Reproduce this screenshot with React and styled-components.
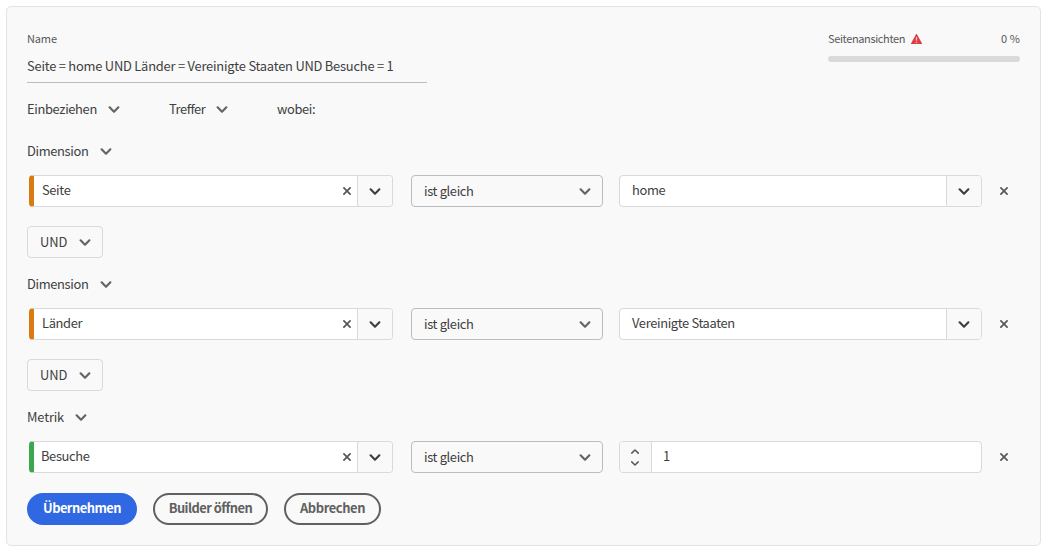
import React from 'react';
import styled, { createGlobalStyle } from 'styled-components';

const GlobalStyle = createGlobalStyle`
  *, *::before, *::after { box-sizing: border-box; }
  body {
    margin: 0;
    background: #fff;
    color: #404040;
    font-family: "Noto Sans CJK SC", "Noto Sans", sans-serif;
    font-size: 12.9px;
    line-height: 20px;
  }
  button, input { font: inherit; color: inherit; }
`;

const Panel = styled.main`
  width: 1035px;
  height: 540px;
  margin: 6px 0 0 6px;
  padding: 21px 20px 20px;
  background: #f9f9f9;
  border: 1px solid #e3e3e3;
  border-radius: 5px;
`;

const Header = styled.header`
  display: flex;
  justify-content: space-between;
  height: 55px;
`;

const NameField = styled.div`
  width: 400px;
  border-bottom: 1px solid #bcbcbc;
`;

const Text = styled.span`
  display: block;
  white-space: nowrap;
  letter-spacing: ${(p) => p.$track ?? -0.35}px;
`;

const SmallText = styled(Text)`
  font-size: 11px;
  color: #585858;
`;

const NameValue = styled(Text)`
  margin-top: 8px;
`;

const Meter = styled.div`
  width: 192px;
`;

const MeterHead = styled.div`
  display: flex;
  align-items: center;
  gap: 6px;
`;

const MeterValue = styled(SmallText)`
  margin-left: auto;
`;

const AlertMark = styled.span`
  display: flex;
  padding-top: 2px;
`;

const Track = styled.div`
  height: 6px;
  margin-top: 8px;
  border-radius: 3px;
  background: #dadada;
`;

const Scope = styled.div`
  display: flex;
  gap: 49px;
  height: 32px;
  margin-top: 10px;
`;

const Picker = styled.button`
  display: flex;
  flex: none;
  align-items: center;
  justify-content: space-between;
  width: ${(p) => p.$width}px;
  height: 32px;
  padding: 0;
  border: 0;
  background: none;
`;

const ScopeLabel = styled.div`
  display: flex;
  align-items: center;
`;

const GroupHead = styled.div`
  display: flex;
  margin: 10px 0 8px;
`;

const Row = styled.div`
  display: flex;
  align-items: center;
  height: 32px;
  padding-left: 2px;
`;

const Field = styled.div`
  display: flex;
  width: ${(p) => p.$width}px;
  height: 32px;
  border: 1px solid #d9d9d9;
  border-left: ${(p) => (p.$accent ? `5px solid ${p.$accent}` : '1px solid #d9d9d9')};
  border-radius: 4px;
  overflow: hidden;
  background: #fff;
`;

const FieldValue = styled.div`
  display: flex;
  flex: 1;
  align-items: center;
  justify-content: space-between;
  padding: 0 6px 2px ${(p) => p.$indent}px;
`;

const ClearIcon = styled.span`
  display: flex;
  padding-top: 2px;
  color: #585858;
`;

const FieldButton = styled.div`
  display: flex;
  align-items: center;
  justify-content: center;
  width: 35px;
  color: #404040;
  background: #f9f9f9;
  border-left: 1px solid #d9d9d9;
`;

const Stepper = styled.div`
  display: flex;
  flex-direction: column;
  align-items: center;
  justify-content: center;
  gap: 7px;
  width: 32px;
  padding-right: 1px;
  color: #585858;
  background: #f9f9f9;
  border-right: 1px solid #d9d9d9;
`;

const Select = styled.button`
  display: flex;
  align-items: center;
  justify-content: space-between;
  width: 192px;
  height: 32px;
  margin: 0 16px 0 18px;
  padding: 0 11px 0 12px;
  border: 1px solid #bcbcbc;
  border-radius: 4px;
  background: #f9f9f9;
`;

const Remove = styled.span`
  display: flex;
  margin-left: 18px;
  color: #585858;
`;

const Operator = styled.button`
  display: flex;
  align-items: center;
  justify-content: space-between;
  width: 76px;
  height: 32px;
  margin-top: 19px;
  padding: 0 11px 0 12px;
  border: 1px solid #d9d9d9;
  border-radius: 4px;
  background: #f9f9f9;
`;

const Actions = styled.footer`
  display: flex;
  gap: 16px;
  margin-top: 20px;
`;

const Action = styled.button`
  display: flex;
  align-items: center;
  justify-content: center;
  width: ${(p) => p.$width}px;
  height: 32px;
  padding: 0 0 2px;
  border: 2px solid ${(p) => (p.$primary ? '#3067e3' : '#606060')};
  border-radius: 16px;
  background: ${(p) => (p.$primary ? '#3067e3' : 'transparent')};
  color: ${(p) => (p.$primary ? '#fff' : '#606060')};
  font-weight: 700;
`;

const Icon = styled.svg`
  display: block;
  flex: none;
  fill: currentColor;
  transform: ${(p) => (p.$up ? 'rotate(180deg)' : 'none')};
`;

const IconTone = styled.span`
  display: flex;
  color: #646464;
`;

const Chevron = () => (
  <Icon width="12" height="7" viewBox="-0.4 -0.2 10.8 6.4">
    <path d="M9.99 1.01A1 1 0 0 0 8.283.303L5 3.586 1.717.303A1 1 0 1 0 .303 1.717l3.99 3.98a1 1 0 0 0 1.414 0l3.99-3.98a.997.997 0 0 0 .293-.707z" />
  </Icon>
);

const SmallChevron = ({ up }) => (
  <Icon $up={up} width="8" height="5" viewBox="0 0 8 5">
    <path d="M7.8.4a.75.75 0 0 0-1.06-.05L4 3 1.26.35A.75.75 0 1 0 .2 1.4l3.27 3.2a.75.75 0 0 0 1.06 0L7.8 1.4a.72.72 0 0 0 0-1z" />
  </Icon>
);

const Cross = () => (
  <Icon width="8" height="8" viewBox="0 0 10 10">
    <path d="M6.548 5L9.63 1.917A1.094 1.094 0 0 0 8.084.371L5 3.454 1.917.37A1.094 1.094 0 0 0 .371 1.917L3.454 5 .37 8.085A1.094 1.094 0 1 0 1.917 9.63L5 6.548l3.084 3.083A1.094 1.094 0 0 0 9.63 8.085z" />
  </Icon>
);

const Alert = () => (
  <Icon width="11" height="10" viewBox="0 0 11 10">
    <path fill="#dc3c46" d="M5.05.3a.52.52 0 0 1 .9 0l4.98 9a.47.47 0 0 1-.42.7H.49a.47.47 0 0 1-.42-.7z" />
    <path fill="#f6b5b9" d="M4.8 3h1.4v3.8H4.8zM4.8 7.7h1.4V9H4.8z" />
  </Icon>
);

const ORANGE = '#da7b11';
const GREEN = '#3da74e';

const GROUPS = [
  { kind: 'Dimension', width: 85, item: 'Seite', indent: 8, accent: ORANGE, value: 'home' },
  { kind: 'Dimension', width: 85, item: 'Länder', indent: 8, accent: ORANGE, value: 'Vereinigte Staaten' },
  { kind: 'Metrik', width: 60, item: 'Besuche', indent: 7, accent: GREEN, value: '1', numeric: true },
];

const Group = ({ group, last }) => (
  <section>
    <GroupHead>
      <Picker $width={group.width}>
        <Text $track={group.numeric ? -0.15 : -0.35}>{group.kind}</Text>
        <IconTone><Chevron /></IconTone>
      </Picker>
    </GroupHead>
    <Row>
      <Field $width={364} $accent={group.accent}>
        <FieldValue $indent={group.indent}>
          <Text>{group.item}</Text>
          <ClearIcon><Cross /></ClearIcon>
        </FieldValue>
        <FieldButton><Chevron /></FieldButton>
      </Field>
      <Select>
        <Text>ist gleich</Text>
        <IconTone><Chevron /></IconTone>
      </Select>
      <Field $width={363}>
        {group.numeric && (
          <Stepper>
            <SmallChevron up />
            <SmallChevron />
          </Stepper>
        )}
        <FieldValue $indent={group.numeric ? 11 : 12}>
          <Text>{group.value}</Text>
        </FieldValue>
        {!group.numeric && <FieldButton><Chevron /></FieldButton>}
      </Field>
      <Remove><Cross /></Remove>
    </Row>
    {!last && (
      <Operator>
        <Text $track={0}>UND</Text>
        <IconTone><Chevron /></IconTone>
      </Operator>
    )}
  </section>
);

export default function App() {
  return (
    <>
      <GlobalStyle />
      <Panel>
        <Header>
          <NameField>
            <SmallText $track={-0.15}>Name</SmallText>
            <NameValue $track={-0.22}>Seite = home UND Länder = Vereinigte Staaten UND Besuche = 1</NameValue>
          </NameField>
          <Meter>
            <MeterHead>
              <SmallText $track={-0.37}>Seitenansichten</SmallText>
              <AlertMark><Alert /></AlertMark>
              <MeterValue $track={0.1}>0 %</MeterValue>
            </MeterHead>
            <Track />
          </Meter>
        </Header>
        <Scope>
          <Picker $width={93}>
            <Text>Einbeziehen</Text>
            <IconTone><Chevron /></IconTone>
          </Picker>
          <Picker $width={59}>
            <Text $track={-0.45}>Treffer</Text>
            <IconTone><Chevron /></IconTone>
          </Picker>
          <ScopeLabel><Text>wobei:</Text></ScopeLabel>
        </Scope>
        {GROUPS.map((group, i) => (
          <Group key={i} group={group} last={i === GROUPS.length - 1} />
        ))}
        <Actions>
          <Action $primary $width={110}><Text $track={-0.53}>Übernehmen</Text></Action>
          <Action $width={115}><Text $track={-0.52}>Builder öffnen</Text></Action>
          <Action $width={97}><Text $track={-0.4}>Abbrechen</Text></Action>
        </Actions>
      </Panel>
    </>
  );
}
